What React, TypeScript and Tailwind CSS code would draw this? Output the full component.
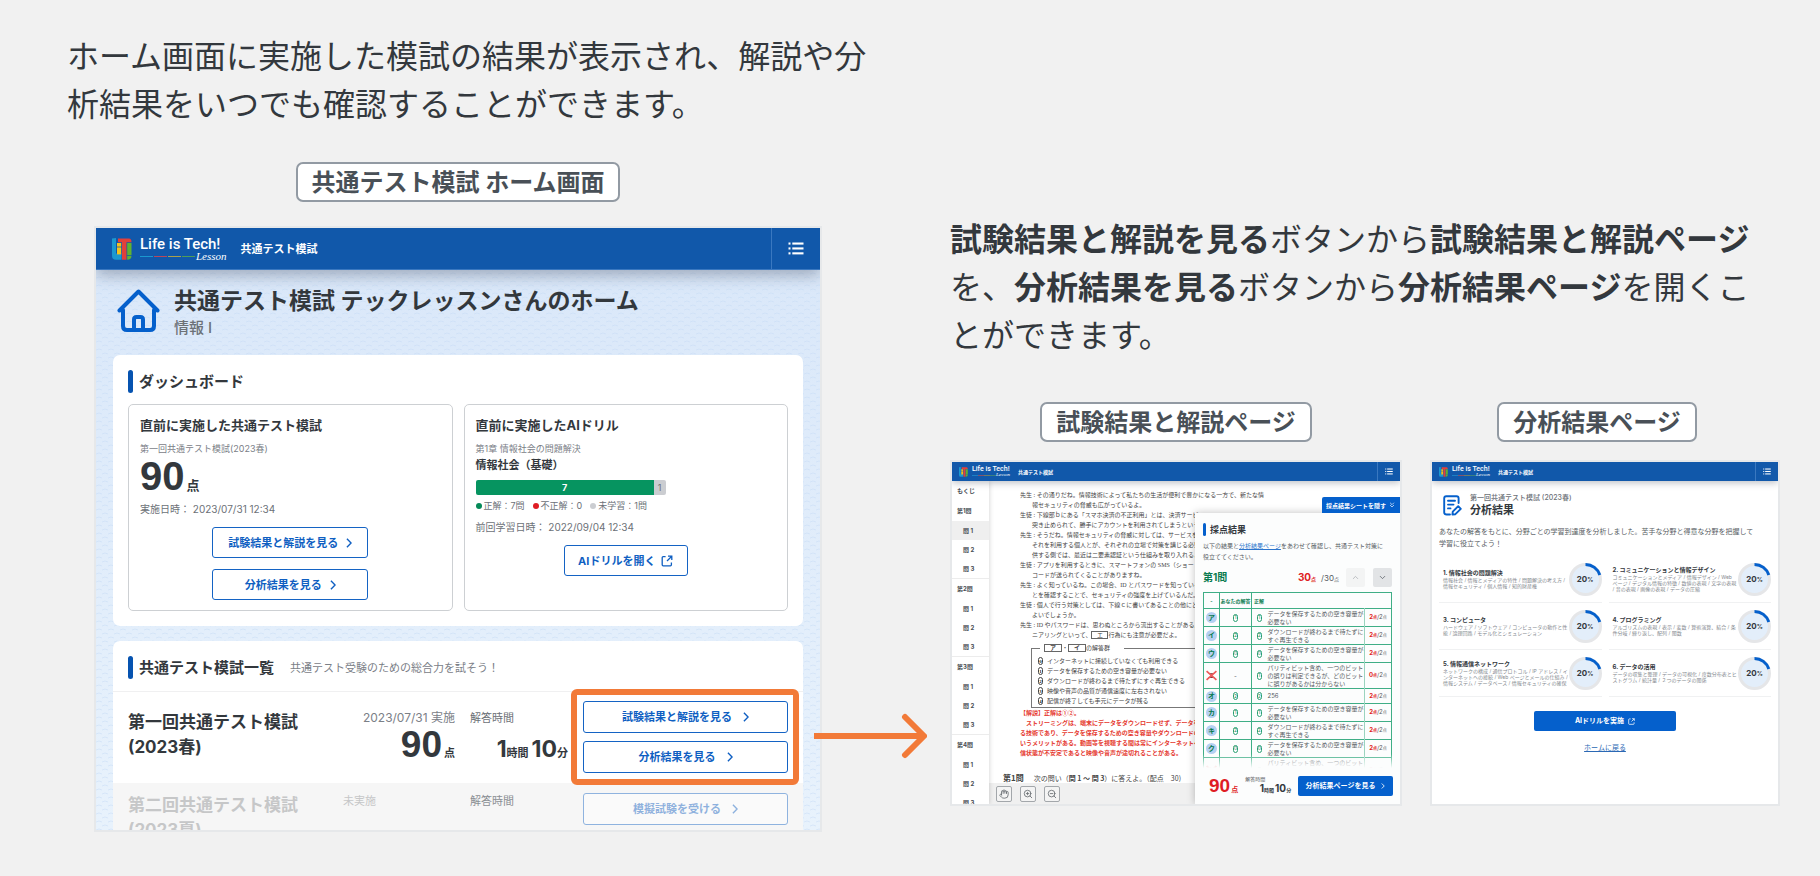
import { Fragment } from "react";
import type { ReactNode } from "react";
import { ChevronDown, ChevronUp, ChevronsDown, Hand, ZoomIn, ZoomOut } from "lucide-react";

const examLines = [
  { who: "先生", text: "その通りだね。情報技術によって私たちの生活が便利で豊かになる一方で、新たな情" },
  { text: "報セキュリティの脅威も広がっているよ。" },
  { who: "生徒", text: "下線部ｂにある「スマホ決済の不正利用」とは、決済サービス" },
  { text: "突き止められて、勝手にアカウントを利用されてしまうということ" },
  { who: "先生", text: "そうだね。情報セキュリティの脅威に対しては、サービスを提" },
  { text: "それを利用する個人とが、それぞれの立場で対策を講じる必要が" },
  { text: "供する側では、最近は二要素認証という仕組みを取り入れること" },
  { who: "生徒", text: "アプリを利用するときに、スマートフォンの SMS（ショートメ" },
  { text: "コードが送られてくることがありますね。" },
  { who: "先生", text: "よく知っているね。この場合、ID とパスワードを知っているこ" },
  { text: "とを確認することで、セキュリティの強度を上げているんだ。" },
  { who: "生徒", text: "個人で行う対策としては、下線ｃに書いてあることの他にどん" },
  { text: "よいでしょうか。" },
  { who: "先生", text: "ID やパスワードは、思わぬところから流出することがあるん" },
];

const choices = [
  "インターネットに接続していなくても利用できる",
  "データを保存するための空き容量が必要ない",
  "ダウンロードが終わるまで待たずにすぐ再生できる",
  "映像や音声の品質が通信速度に左右されない",
  "配信が終了しても手元にデータが残る",
];

const explanation = [
  "【解説】正解は①②。",
  "　ストリーミングは、端末にデータをダウンロードせず、データを受",
  "る技術であり、データを保存するための空き容量やダウンロードの",
  "いうメリットがある。動画等を視聴する間は常にインターネットへの",
  "信状態が不安定であると映像や音声が途切れることがある。",
];

const SAVE = "データを保存するための空き容量が必要ない";
const STREAM = "ダウンロードが終わるまで待たずにすぐ再生できる";
const PARITY = "パリティビット含め、一つのビットの誤りは判定できるが、どのビットに誤りがあるかは分からない";

const answers = [
  { mark: "ア", mine: "1", correct: "1", text: SAVE, score: 2 },
  { mark: "イ", mine: "2", correct: "2", text: STREAM, score: 2 },
  { mark: "ウ", mine: "0", correct: "0", text: SAVE, score: 2 },
  { mark: "エ", mine: "-", correct: "1", text: PARITY, score: 0 },
  { mark: "オ", mine: "2", correct: "2", text: "256", score: 2 },
  { mark: "カ", mine: "1", correct: "1", text: SAVE, score: 2 },
  { mark: "キ", mine: "2", correct: "2", text: STREAM, score: 2 },
  { mark: "ク", mine: "0", correct: "0", text: SAVE, score: 2 },
  { mark: "ケ", mine: "-", correct: "1", text: PARITY, score: 0 },
];

const fields = [
  { title: "1. 情報社会の問題解決", desc: "情報社会 / 情報とメディアの特性 / 問題解決の考え方 / 情報セキュリティ / 個人情報 / 知的財産権" },
  { title: "2. コミュニケーションと情報デザイン", desc: "コミュニケーションとメディア / 情報デザイン / Web ページ / デジタル情報の特徴 / 数値の表現 / 文字の表現 / 音の表現 / 画像の表現 / データの圧縮" },
  { title: "3. コンピュータ", desc: "ハードウェア / ソフトウェア / コンピュータの動作と性能 / 論理回路 / モデル化とシミュレーション" },
  { title: "4. プログラミング", desc: "アルゴリズムの表現 / 表示 / 変数 / 算術演算、結合 / 条件分岐 / 繰り返し、配列 / 関数" },
  { title: "5. 情報通信ネットワーク", desc: "ネットワークの構成 / 通信プロトコル / IP アドレス / インターネットへの接続 / Web ページとメールの仕組み / 情報システム / データベース / 情報セキュリティの確保" },
  { title: "6. データの活用", desc: "データの収集と整理 / データの可視化 / 度数分布表とヒストグラム / 統計量 / ２つのデータの関係" },
];

function LogoMark({ className }: { className: string }) {
  return (
    <svg viewBox="0 0 20 22" className={className} aria-hidden="true">
      <path d="M0 0.5 L4 0 V15.5 H9.5 V21.8 H4 Q0 21.8 0 17.5 Z" fill="#1b98cf" />
      <rect x="5" y="5" width="4.2" height="3.6" fill="#f3c21b" />
      <rect x="5" y="9.4" width="4.2" height="7" fill="#f3c21b" />
      <path d="M6 0.5 H17 Q19.5 0.5 19.5 4.2 H14.5 V21.8 H10 V4.2 H6 Z" fill="#e2403a" />
      <rect x="15.2" y="5" width="4.3" height="12" fill="#62b22f" />
      <path d="M15.2 17.8 H19.5 Q19.5 21.8 15.2 21.8 Z" fill="#62b22f" />
    </svg>
  );
}

function ListIcon({ className }: { className: string }) {
  return (
    <svg viewBox="0 0 16 13" className={className} fill="#fff" aria-hidden="true">
      {[0.5, 5.4, 10.3].map((y) => (
        <Fragment key={y}>
          <rect x="0.5" y={y} width="2" height="2.1" />
          <rect x="4.3" y={y} width="11.2" height="2.1" />
        </Fragment>
      ))}
    </svg>
  );
}

function Chevron({ className }: { className: string }) {
  return (
    <svg viewBox="0 0 7 12" className={className} fill="none" stroke="currentColor" strokeWidth="1.7" aria-hidden="true">
      <path d="M1 1 L6 6 L1 11" />
    </svg>
  );
}

function OpenIcon({ className }: { className: string }) {
  return (
    <svg viewBox="0 0 12 12" className={className} fill="none" stroke="currentColor" strokeWidth="1.3" aria-hidden="true">
      <path d="M4.6 1.6 H2.2 Q1.2 1.6 1.2 2.6 V9.8 Q1.2 10.8 2.2 10.8 H9.4 Q10.4 10.8 10.4 9.8 V7.4" />
      <path d="M7 1.2 H10.8 V5 M10.8 1.2 L6 6" />
    </svg>
  );
}

function BigHeader() {
  return (
    <header className="relative z-10 flex h-[42px] items-center border-b border-[#3a78c0] bg-[#1158aa] pl-4 text-white shadow-[0_5px_16px_rgba(40,50,70,0.35)]">
      <LogoMark className="h-[22px] w-5" />
      <div className="ml-2">
        <div className="font-[Roboto,sans-serif] text-[15px] leading-[15px] font-medium">Life is Tech!</div>
        <div className="flex h-2 items-center gap-px">
          <span className="h-px w-[13px] bg-[#1b98cf]" />
          <span className="h-px w-[13px] bg-[#b8485c]" />
          <span className="h-px w-[13px] bg-[#a8a04c]" />
          <span className="h-px w-[13px] bg-[#4f9c58]" />
          <span className="font-['Liberation_Serif',serif] text-[11px] leading-2 italic">Lesson</span>
        </div>
      </div>
      <span className="ml-[14px] text-[11px] leading-4 font-bold">共通テスト模試</span>
      <button type="button" aria-label="メニュー" className="ml-auto flex h-full w-[49px] items-center justify-center border-l border-[#3a78c0]">
        <ListIcon className="h-[13px] w-4" />
      </button>
    </header>
  );
}

function SmallHeader() {
  return (
    <header className="relative z-10 flex h-[19px] items-center bg-[#1158aa] pl-[7px] text-white shadow-[0_2px_7px_rgba(40,50,70,0.3)]">
      <LogoMark className="h-[10px] w-[9px]" />
      <div className="ml-1">
        <div className="font-[Roboto,sans-serif] text-[7px] leading-[7px] font-medium">Life is Tech!</div>
        <div className="flex h-1 items-center">
          <span className="h-px w-[6px] bg-[#1b80c4]" />
          <span className="h-px w-[6px] bg-[#84506e]" />
          <span className="h-px w-[6px] bg-[#6c7c68]" />
          <span className="h-px w-[6px] bg-[#3a8080]" />
          <span className="font-['Liberation_Serif',serif] text-[5px] leading-1 italic">Lesson</span>
        </div>
      </div>
      <span className="ml-2 text-[5px] leading-2 font-bold">共通テスト模試</span>
      <button type="button" aria-label="メニュー" className="ml-auto flex h-full w-[23px] items-center justify-center border-l border-[#3a78c0]">
        <ListIcon className="h-[7px] w-2" />
      </button>
    </header>
  );
}

function Label({ children }: { children: ReactNode }) {
  return (
    <figcaption className="mx-auto w-fit rounded-[7px] border-2 border-[#929aa3] bg-white px-[14px] pt-px text-2xl leading-[35px] font-bold whitespace-pre text-[#495057]">
      {children}
    </figcaption>
  );
}

function OutlineButton({ children, className, icon }: { children: ReactNode; className: string; icon?: ReactNode }) {
  return (
    <button type="button" className={`flex items-center justify-center rounded-[3px] border border-[#1463c4] bg-white text-[11px] leading-4 font-bold text-[#0f5fc2] ${className}`}>
      {children}
      {icon ?? <Chevron className="h-[10px] w-[6px]" />}
    </button>
  );
}

function Heading({ children }: { children: ReactNode }) {
  return (
    <h3 className="flex items-center gap-[6px] text-[15px] leading-[23px] font-bold">
      <span className="h-[23px] w-[5px] rounded-full bg-[#0653b0]" />
      {children}
    </h3>
  );
}

function Oval({ children, dark }: { children: ReactNode; dark?: boolean }) {
  return (
    <span className={`inline-flex h-[8px] w-[5px] items-center justify-center rounded-full border align-middle text-[5px] leading-none ${dark ? "border-[#444] font-bold text-[#222]" : "border-[#2aa073] text-[#168a5c]"}`}>
      {children}
    </span>
  );
}

function HomeScreen() {
  return (
    <div className="relative isolate h-[606px] overflow-hidden border-2 border-[#e6e8ea] bg-linear-to-b from-[#d9e7f9] to-[#e8f2fc]">
      <svg className="absolute inset-0 -z-10 h-full w-full" aria-hidden="true">
        <defs>
          <pattern id="waves" width="12" height="8" patternUnits="userSpaceOnUse">
            <path d="M0 2 Q3 0 6 2 M6 6 Q9 4 12 6" fill="none" stroke="#c6daf3" strokeWidth="1" opacity="0.5" />
          </pattern>
        </defs>
        <rect width="100%" height="100%" fill="url(#waves)" />
      </svg>
      <BigHeader />

      <div className="flex gap-[14px] px-[21px] pt-[17px] pb-4">
        <svg viewBox="0 0 43 43" className="mt-[2px] h-[43px] w-[43px]" fill="none" stroke="#0560cc" strokeWidth="4" strokeLinejoin="round" strokeLinecap="round" aria-hidden="true">
          <path d="M2.5 21.5 L21.5 2.5 L40.5 21.5" />
          <path d="M6 21 V37 Q6 41 10 41 H33 Q37 41 37 37 V21" />
          <path d="M17 40 V30.5 Q17 28 19.5 28 H23.5 Q26 28 26 30.5 V40" />
        </svg>
        <div>
          <h2 className="text-[23px] leading-7 font-bold">共通テスト模試 テックレッスンさんのホーム</h2>
          <p className="mt-[2px] text-[15px] leading-[22px] font-medium text-[#6c7177]">情報 I</p>
        </div>
      </div>

      <section className="mx-[17px] rounded-[7px] bg-white p-[15px]">
        <Heading>ダッシュボード</Heading>
        <div className="mt-[11px] grid grid-cols-2 gap-[11px]">
          <article className="rounded-[5px] border border-[#cdd0d3] px-[11px] py-[10px]">
            <h4 className="text-[13px] leading-5 font-bold">直前に実施した共通テスト模試</h4>
            <p className="mt-2 text-[9px] leading-3 text-[#7b8087]">第一回共通テスト模試(2023春)</p>
            <p className="flex h-[42px] items-baseline gap-[2px] text-[13px] font-bold">
              <span className="font-['Liberation_Sans',sans-serif] text-[40px] leading-[42px]">90</span>点
            </p>
            <p className="mt-1 text-[10px] leading-4 text-[#6c7177]">実施日時： 2023/07/31 12:34</p>
            <OutlineButton className="mx-auto mt-[10px] h-[31px] w-[156px] gap-2">試験結果と解説を見る</OutlineButton>
            <OutlineButton className="mx-auto mt-[11px] h-[31px] w-[156px] gap-2">分析結果を見る</OutlineButton>
          </article>
          <article className="rounded-[5px] border border-[#cdd0d3] px-[11px] py-[10px]">
            <h4 className="text-[13px] leading-5 font-bold">直前に実施したAIドリル</h4>
            <p className="mt-2 text-[9px] leading-3 text-[#7b8087]">第1章 情報社会の問題解決</p>
            <p className="mt-[2px] text-[11px] leading-4 font-bold">情報社会（基礎）</p>
            <div className="mt-[7px] flex h-[15px] w-[190px] overflow-hidden rounded-[2px] text-center text-[9px] leading-[15px]">
              <span className="flex-1 bg-[#069460] font-bold text-white">7</span>
              <span className="w-3 bg-[#cbcdd1] text-[#6c7177]">1</span>
            </div>
            <ul className="mt-[5px] flex gap-2 text-[9px] leading-3 text-[#6c7177]">
              <li className="flex items-center gap-[2px]"><span className="size-[6px] rounded-full bg-[#068a58]" />正解：7問</li>
              <li className="flex items-center gap-[2px]"><span className="size-[6px] rounded-full bg-[#df1c24]" />不正解：0</li>
              <li className="flex items-center gap-[2px]"><span className="size-[6px] rounded-full bg-[#cbcdd1]" />未学習：1問</li>
            </ul>
            <p className="mt-[7px] text-[10px] leading-4 text-[#6c7177]">前回学習日時： 2022/09/04 12:34</p>
            <OutlineButton className="mx-auto mt-[10px] h-[31px] w-[124px] gap-[6px]" icon={<OpenIcon className="size-3" />}>AIドリルを開く</OutlineButton>
          </article>
        </div>
      </section>

      <section className="mx-[17px] mt-[15px] overflow-hidden rounded-[7px] bg-white">
        <div className="flex items-center gap-4 border-b border-[#f0f0f1] px-[15px] pt-[15px] pb-3">
          <Heading>共通テスト模試一覧</Heading>
          <p className="text-[11px] leading-4 text-[#7b8087]">共通テスト受験のための総合力を試そう！</p>
        </div>
        <div className="grid h-[91px] grid-cols-[1fr_112px_98px_205px] items-start gap-x-[15px] px-[15px] pt-[9px]">
          <h4 className="mt-[9px] text-[17px] leading-[25px] font-bold">第一回共通テスト模試<br />(2023春)</h4>
          <div className="mt-[9px] text-right">
            <p className="text-xs leading-4 text-[#7b8087]">2023/07/31 実施</p>
            <p className="flex items-baseline justify-end gap-[2px] text-[11px] font-bold">
              <span className="font-['Liberation_Sans',sans-serif] text-[37px] leading-[38px]">90</span>点
            </p>
          </div>
          <div className="mt-[9px]">
            <p className="text-[11px] leading-4 text-[#6c7177]">解答時間</p>
            <p className="flex items-baseline justify-end text-[11px] font-bold whitespace-nowrap">
              <span className="text-[23px] leading-[46px]">1</span>時間
              <span className="ml-[3px] text-[23px] leading-[46px]">10</span>分
            </p>
          </div>
          <div className="grid gap-2">
            <OutlineButton className="h-8 gap-[11px]">試験結果と解説を見る</OutlineButton>
            <OutlineButton className="h-8 gap-[11px]">分析結果を見る</OutlineButton>
          </div>
        </div>
        <div className="grid h-[91px] grid-cols-[1fr_112px_98px_205px] items-start gap-x-[15px] bg-[#f6f6f6] px-[15px] pt-[10px]">
          <h4 className="text-[17px] leading-[25px] font-bold text-[#c6c7c8]">第二回共通テスト模試<br />(2023夏)</h4>
          <p className="text-[11px] leading-4 text-[#c6c7c8]">未実施</p>
          <p className="text-[11px] leading-4 text-[#8b8f94]">解答時間</p>
          <OutlineButton className="h-8 gap-[11px] opacity-45">模擬試験を受ける</OutlineButton>
        </div>
      </section>
    </div>
  );
}

function QuestionNav() {
  return (
    <nav className="relative z-[1] w-[37px] shrink-0 overflow-hidden bg-white text-[6px] font-bold text-[#4a4f55] shadow-[0_0_5px_rgba(0,0,0,0.2)]">
      <a href="#toc" className="block h-[19px] pl-[5px] leading-[19px]">もくじ</a>
      {[1, 2, 3, 4].map((q) => (
        <div key={q} className={q > 1 ? "border-t border-[#ececec]" : "pt-px"}>
          <a href={`#q${q}`} className="block h-5 pl-[5px] leading-5">第{q}問</a>
          {[1, 2, 3].map((n) => (
            <a key={n} href={`#q${q}-${n}`} className={`block h-[19px] pl-[11px] leading-[19px] ${q === 1 && n === 1 ? "bg-[#efefef]" : ""}`}>
              問 {n}
            </a>
          ))}
        </div>
      ))}
    </nav>
  );
}

function ResultPanel() {
  return (
    <aside className="absolute top-8 right-0 bottom-0 w-[205px] bg-[#fcfdfd] shadow-[0_0_8px_rgba(0,0,0,0.25)]">
      <button type="button" className="absolute -top-4 right-0 flex h-4 w-[78px] items-center justify-center gap-[2px] rounded-tl-[2px] bg-[#0560cc] text-[6px] font-bold whitespace-nowrap text-white">
        採点結果シートを隠す
        <ChevronsDown size={8} strokeWidth={2} />
      </button>
      <div className="h-[255px] overflow-hidden px-2 pt-[10px]">
        <h3 className="flex items-center gap-1 text-[9px] leading-[13px] font-bold">
          <span className="h-[13px] w-[3px] rounded-full bg-[#0560cc]" />
          採点結果
        </h3>
        <p className="mt-1 text-[6px] leading-[11px] text-[#565b61]">
          以下の結果と<a href="#analysis" className="text-[#2b74cc] underline">分析結果ページ</a>をあわせて確認し、共通テスト対策に
          <br />
          役立ててください。
        </p>
        <div className="mt-[6px] flex h-[19px] items-center">
          <h4 className="text-[10px] font-bold text-[#087a4e]">第1問</h4>
          <p className="ml-auto flex items-baseline text-[5px] font-bold text-[#df1c24]"><span className="text-[10px]">30</span>点</p>
          <p className="ml-[5px] flex items-baseline text-[5px] text-[#565b61]"><span className="text-[8px]">/30</span>点</p>
          <button type="button" aria-label="前の問題" className="ml-[7px] flex size-[19px] items-center justify-center rounded-[2px] bg-[#f3f4f4] text-[#a9adb1]">
            <ChevronUp size={9} />
          </button>
          <button type="button" aria-label="次の問題" className="ml-2 flex size-[19px] items-center justify-center rounded-[2px] bg-[#e2e4e6] text-[#565b61]">
            <ChevronDown size={9} />
          </button>
        </div>
        <table className="mt-[5px] w-full table-fixed border-collapse border border-[#3fae86] text-[6px] leading-2 text-[#565b61]">
          <colgroup>
            <col className="w-4" />
            <col className="w-8" />
            <col className="w-[15px]" />
            <col />
            <col className="w-[27px]" />
          </colgroup>
          <thead>
            <tr className="h-4 border-b border-[#3fae86] text-[5px] text-[#087a4e]">
              <th className="border-r border-[#3fae86]">-</th>
              <th className="border-r border-[#3fae86] whitespace-nowrap">あなたの解答</th>
              <th colSpan={3} className="pl-[2px] text-left">正解</th>
            </tr>
          </thead>
          <tbody>
            {answers.map((a) => (
              <tr key={a.mark} className="border-b border-[#3fae86]">
                <td className="border-r border-[#3fae86]">
                  {a.score > 0 ? (
                    <span className="mx-auto flex size-[11px] items-center justify-center rounded-full bg-[#b5d0f2] text-[7px] font-bold text-[#087a4e]">{a.mark}</span>
                  ) : (
                    <span className="relative mx-auto flex size-[11px] items-center justify-center text-[7px] font-bold text-[#7c4040]">
                      {a.mark}
                      <svg viewBox="0 0 10 10" className="absolute inset-0" stroke="#ee5a5a" strokeWidth="1.6" aria-hidden="true">
                        <path d="M0.5 1 L9.5 9 M9.5 1 L0.5 9" />
                      </svg>
                    </span>
                  )}
                </td>
                <td className="border-r border-[#3fae86] text-center">{a.mine === "-" ? "-" : <Oval>{a.mine}</Oval>}</td>
                <td className="text-center"><Oval>{a.correct}</Oval></td>
                <td className={`pl-px ${a.text === "256" ? "py-[3px]" : "pt-px"}`}>{a.text}</td>
                <td className="border-l border-[#9bd4bf] text-center whitespace-nowrap">
                  <b className="text-[#df1c24]">{a.score}<span className="text-[4px]">点</span></b>/2<span className="text-[4px]">点</span>
                </td>
              </tr>
            ))}
          </tbody>
        </table>
      </div>
      <div className="absolute inset-x-0 bottom-9 h-[14px] bg-linear-to-b from-transparent to-[#fcfdfd]" />
      <footer className="relative flex h-9 items-center bg-[#fcfdfd] pr-[7px] pl-[14px]">
        <p className="flex items-baseline gap-px text-[7px] font-bold text-[#df1c24]"><span className="font-['Liberation_Sans',sans-serif] text-[19px] leading-5">90</span>点</p>
        <div className="ml-[7px] w-[46px]">
          <p className="text-[5px] leading-[6px] text-[#565b61]">解答時間</p>
          <p className="flex items-baseline justify-end text-[5px] leading-3 font-bold whitespace-nowrap">
            <span className="text-[10px]">1</span>時間<span className="ml-px text-[10px]">10</span>分
          </p>
        </div>
        <button type="button" className="ml-auto flex h-5 w-[95px] items-center justify-center gap-[6px] rounded-[2px] bg-[#0560cc] text-[7px] font-bold whitespace-nowrap text-white">
          分析結果ページを見る
          <Chevron className="h-[6px] w-1" />
        </button>
      </footer>
    </aside>
  );
}

function ExamScreen() {
  return (
    <div className="h-[346px] overflow-hidden border-2 border-[#e6e8ea] bg-white">
      <SmallHeader />
      <div className="relative flex h-[323px]">
        <QuestionNav />
        <div className="relative min-w-0 flex-1 overflow-hidden pt-[9px] font-['Liberation_Serif','Noto_Sans_CJK_JP',serif] text-[6px] leading-[10px] whitespace-nowrap text-[#444]">
          <div className="pl-[31px]">
            {examLines.map((line) => (
              <p key={line.text} className={line.who ? "" : "pl-3"}>
                {line.who ? `${line.who} : ` : ""}{line.text}
              </p>
            ))}
            <p className="pl-3">
              ニアリングといって、<span className="inline-block w-[17px] border border-[#666] text-center leading-[6px]">エ</span>行為にも注意が必要だよ。
            </p>
            <div className="relative mt-2 ml-[11px] h-[60px] border border-[#777] pt-[7px] pl-[6px]">
              <p className="absolute -top-[6px] left-2 bg-white pr-[14px] pl-1">
                <span className="inline-block w-[18px] border border-[#666] text-center leading-[6px] font-bold">ア</span>・
                <span className="inline-block w-[18px] border border-[#666] text-center leading-[6px] font-bold">イ</span>の解答群
              </p>
              {choices.map((c, i) => (
                <p key={c} className="flex items-center gap-1"><Oval dark>{i}</Oval>{c}</p>
              ))}
            </div>
            <div className="font-['Noto_Sans_CJK_JP',sans-serif] font-bold text-[#e5392f]">
              {explanation.map((e) => (
                <p key={e}>{e}</p>
              ))}
            </div>
          </div>
          <p className="mt-[14px] flex gap-[10px] pl-[14px] font-['Noto_Sans_CJK_JP',sans-serif] text-[7px] leading-3">
            <b className="text-[8px]">第1問</b>
            <span>次の問い（<b>問 1 〜 問 3</b>）に答えよ。（配点　30)</span>
          </p>
          <div className="absolute inset-x-0 bottom-0 flex h-[21px] items-center gap-2 bg-[#f0f0f0] pl-[7px] text-[#666b70]">
            {[
              { icon: Hand, label: "移動" },
              { icon: ZoomIn, label: "拡大" },
              { icon: ZoomOut, label: "縮小" },
            ].map(({ icon: Icon, label }) => (
              <button key={label} type="button" aria-label={label} className="flex size-4 items-center justify-center rounded-[2px] border border-[#a3a7ab] bg-[#f4f4f4]">
                <Icon size={10} />
              </button>
            ))}
          </div>
        </div>
        <ResultPanel />
      </div>
    </div>
  );
}

function AnalysisScreen() {
  return (
    <div className="h-[346px] overflow-hidden border-2 border-[#e6e8ea] bg-white">
      <SmallHeader />
      <div className="px-[7px] pt-3">
        <div className="flex items-center gap-2 pl-1">
          <svg viewBox="0 0 19 21" className="h-[21px] w-[19px]" fill="none" stroke="#0560cc" strokeWidth="1.9" strokeLinecap="round" strokeLinejoin="round" aria-hidden="true">
            <path d="M7 19.5 H3.6 Q1.2 19.5 1.2 17.5 V3.2 Q1.2 1.2 3.2 1.2 H13.6 Q15.6 1.2 15.6 3.2 V8" />
            <path d="M5 5.8 H12 M5 9.6 H10.5 M5 13.4 H7.5" />
            <path d="M9.4 19.6 L9.8 16.6 L15.2 11.2 L17.8 13.8 L12.4 19.2 Z" />
          </svg>
          <div>
            <p className="text-[7px] leading-[10px] font-medium text-[#6c7177]">第一回共通テスト模試 (2023春)</p>
            <h3 className="text-[11px] leading-[15px] font-bold">分析結果</h3>
          </div>
        </div>
        <p className="mt-2 text-[7px] leading-3 whitespace-nowrap text-[#565b61]">
          あなたの解答をもとに、分野ごとの学習到達度を分析しました。苦手な分野と得意な分野を把握して
          <br />
          学習に役立てよう！
        </p>
        <div className="mt-[6px] grid grid-cols-2 gap-x-[7px]">
          {fields.map((f) => (
            <article key={f.title} className="flex h-[47px] items-center border-b border-[#f0f1f2] pl-1">
              <div className="min-w-0 flex-1">
                <h4 className="text-[6px] leading-2 font-bold whitespace-nowrap">{f.title}</h4>
                <p className="text-[5px] leading-[6px] text-[#858a90]">{f.desc}</p>
              </div>
              <div className="relative flex size-[33px] shrink-0 items-center justify-center">
                <svg viewBox="0 0 33 33" className="absolute inset-0" fill="none" aria-hidden="true">
                  <circle cx="16.5" cy="16.5" r="15" fill="#e3eefa" stroke="#e5e6e8" strokeWidth="3" />
                  <circle cx="16.5" cy="16.5" r="15" stroke="#0560cc" strokeWidth="3" strokeDasharray="18.8 94.3" transform="rotate(-90 16.5 16.5)" />
                </svg>
                <p className="relative text-[8px] font-bold">20<span className="text-[6px]">%</span></p>
              </div>
            </article>
          ))}
        </div>
        <button type="button" className="mx-auto mt-[14px] flex h-5 w-[142px] items-center justify-center gap-1 rounded-[2px] bg-[#0560cc] text-[7px] font-bold text-white">
          AIドリルを実施
          <OpenIcon className="size-[7px]" />
        </button>
        <a href="#home" className="mx-auto mt-[11px] block w-fit text-[7px] leading-3 text-[#2b68b4] underline">ホームに戻る</a>
      </div>
    </div>
  );
}

export default function App() {
  return (
    <main className="grid min-h-screen grid-cols-2 items-start bg-[#f1f1f1] font-[Inter,'Noto_Sans_CJK_JP',sans-serif] text-[#33383d]">
      <section className="pt-[33px]">
        <p className="pr-8 pl-[67px] text-[32px] leading-12">
          ホーム画面に実施した模試の結果が表示され、解説や分析結果をいつでも確認することができます。
        </p>
        <figure className="relative mt-[33px] mr-[88px] ml-[94px]">
          <Label>共通テスト模試 ホーム画面</Label>
          <div className="relative mt-6">
            <HomeScreen />
            <div className="absolute right-[23px] bottom-[47px] h-24 w-[228px] rounded-[6px] border-6 border-[#f27a38]" />
            <svg viewBox="0 0 113 48" className="absolute -right-[105px] bottom-[72px] h-12 w-[113px]" fill="none" stroke="#f27a38" strokeWidth="6" aria-hidden="true">
              <path d="M0 24 H108" />
              <path d="M91 5 L110 24 L91 43" strokeLinecap="round" strokeLinejoin="round" />
            </svg>
          </div>
        </figure>
      </section>

      <section className="px-10 pt-[216px]">
        <p className="text-[32px] leading-12">
          <b>試験結果と解説を見る</b>ボタンから<b>試験結果と解説ページ</b>を、<b>分析結果を見る</b>ボタンから<b>分析結果ページ</b>を開くことができます。
        </p>
        <div className="mt-[42px] grid grid-cols-[452fr_350fr] gap-7">
          <figure>
            <Label>試験結果と解説ページ</Label>
            <div className="mt-[18px]"><ExamScreen /></div>
          </figure>
          <figure>
            <div className="pr-4">
              <Label>分析結果ページ</Label>
            </div>
            <div className="mt-[18px]"><AnalysisScreen /></div>
          </figure>
        </div>
      </section>
    </main>
  );
}
